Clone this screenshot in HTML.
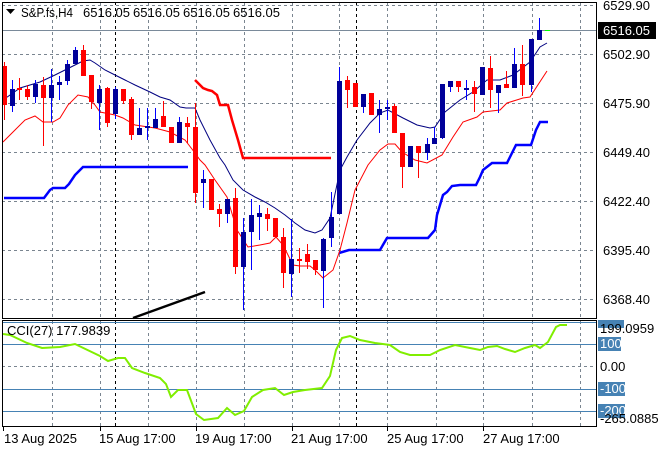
<!DOCTYPE html>
<html><head><meta charset="utf-8"><style>
html,body{margin:0;padding:0;background:#fff;width:660px;height:450px;overflow:hidden}
svg{display:block;font-family:"Liberation Sans",sans-serif;font-size:13px}
</style></head><body>
<svg width="660" height="450" xmlns="http://www.w3.org/2000/svg">
<rect width="660" height="450" fill="#fff"/>
<g stroke="#7a8590" stroke-dasharray="3,3" stroke-width="1">
<line x1="2" x2="596" y1="54.5" y2="54.5"/><line x1="2" x2="596" y1="103.5" y2="103.5"/>
<line x1="2" x2="596" y1="152.5" y2="152.5"/><line x1="2" x2="596" y1="201.5" y2="201.5"/>
<line x1="2" x2="596" y1="250.5" y2="250.5"/><line x1="2" x2="596" y1="299.5" y2="299.5"/>
<line x1="2" x2="596" y1="5.5" y2="5.5"/>
<line x1="2" x2="596" y1="366.5" y2="366.5"/>
</g>
<g stroke="#7a8590" stroke-dasharray="3,3">
<path d="M52.5 2V318M100.5 2V318M148.5 2V318M196.5 2V318M244.5 2V318M292.5 2V318M339.5 2V318M387.5 2V318M436.5 2V318M483.5 2V318M532.5 2V318M580.5 2V318"/>
<path d="M52.5 321V426M100.5 321V426M148.5 321V426M196.5 321V426M244.5 321V426M292.5 321V426M339.5 321V426M387.5 321V426M436.5 321V426M483.5 321V426M532.5 321V426M580.5 321V426"/>
</g>
<g stroke="#000" stroke-dasharray="3,3">
<path d="M115.5 2V318M356.5 2V318M115.5 321V426M356.5 321V426"/>
</g>
<line x1="2" x2="596" y1="30.5" y2="30.5" stroke="#7a8a9a"/>
<polyline fill="none" stroke="#0000ff" stroke-width="2.5" points="4,198 44,198 50,190 53,188 65,188 69,184 75,175 83,167 188,167"/>
<polyline fill="none" stroke="#0000ff" stroke-width="2.5" points="339,253 349,250 380,250 387,238 428,238 435,230 437,215 443,195 447,192 452,186 460,185 476,185 480,177 483,170 492,163 507,163 510,157 516,145 531,145 536,130 540,122 548,122"/>
<polyline fill="none" stroke="#ff0000" stroke-width="2.5" points="195,80 203,88 208,90 212,91 217,95 220,105 228,105 232,120 238,140 243,158 331,158"/>
<polyline fill="none" stroke="#ff0000" stroke-width="1" points="3,142 15,130 25,120 35,116 43,122 53,122 60,118 68,105 78,95 88,97 95,105 100,112 115,115 123,118 135,125 155,128 170,132 185,140 195,153 200,160 205,165 215,180 227,197 237,230 248,247 260,245 270,243 276,237 283,245 293,265 300,266 310,266 315,270 323,278 333,270 340,250 347,223 355,190 368,165 380,150 388,144 395,144 402,152 415,160 427,163 442,155 453,137 463,122 477,117 483,112 500,110 507,103 523,98 530,97 547,71"/>
<polyline fill="none" stroke="#000080" stroke-width="1" points="3,100 20,88 40,82 55,75 65,70 75,65 83,61 90,60 95,63 105,70 115,75 125,80 135,85 150,92 160,97 170,100 180,107 186,108 195,108 200,120 210,140 220,158 225,165 233,180 243,190 255,197 265,202 275,208 285,215 295,223 305,230 315,233 322,230 330,218 340,170 347,157 357,140 370,123 380,113 388,110 403,118 417,125 430,128 435,127 445,112 460,100 473,92 487,80 500,80 513,75 530,62 540,47 547,43"/>
<g>
<g stroke="#ff0000" fill="#ff0000">
<path d="M4.5 62V120M19.5 78V100M27.5 85V100M43.5 77V146M83.5 45V76M91.5 75V109M107.5 87V127M123.5 89V104M131.5 97V140M163.5 101V127M171.5 127V143M187.5 117V143M195.5 103V203M211.5 179V210M219.5 204V227M235.5 188V274M267.5 208V231M275.5 218V237M283.5 228V288M299.5 248V273M307.5 244V269M315.5 260V275M347.5 76V108M355.5 83V107M371.5 93V115M394.5 104V133M402.5 133V188M418.5 146V178M458.5 81V92M474.5 81V112M490.5 56V108M506.5 71V88M522.5 45V96"/>
</g>
<g fill="#ff0000">
<rect x="2" y="66" width="5" height="39"/><rect x="17" y="88" width="5" height="2"/><rect x="25" y="89" width="5" height="8"/>
<rect x="41" y="85" width="5" height="13"/><rect x="81" y="50" width="5" height="26"/><rect x="89" y="75" width="5" height="27"/>
<rect x="105" y="88" width="5" height="35"/><rect x="121" y="89" width="5" height="12"/><rect x="129" y="99" width="5" height="36"/>
<rect x="161" y="116" width="5" height="11"/><rect x="169" y="127" width="5" height="16"/><rect x="185" y="123" width="5" height="4"/>
<rect x="193" y="127" width="5" height="66"/><rect x="209" y="179" width="5" height="31"/><rect x="217" y="209" width="5" height="5"/>
<rect x="233" y="198" width="5" height="69"/><rect x="265" y="214" width="5" height="5"/><rect x="273" y="218" width="5" height="19"/>
<rect x="281" y="237" width="5" height="36"/><rect x="297" y="259" width="5" height="2"/><rect x="305" y="254" width="5" height="8"/>
<rect x="313" y="260" width="5" height="10"/><rect x="345" y="80" width="5" height="10"/><rect x="353" y="83" width="5" height="24"/>
<rect x="369" y="93" width="5" height="22"/><rect x="392" y="106" width="5" height="27"/><rect x="400" y="133" width="5" height="34"/>
<rect x="416" y="146" width="5" height="7"/><rect x="456" y="81" width="5" height="6"/><rect x="472" y="87" width="5" height="7"/>
<rect x="488" y="68" width="5" height="22"/><rect x="504" y="84" width="5" height="4"/><rect x="520" y="64" width="5" height="21"/>
</g>
<g stroke="#0000ff">
<path d="M12.5 80V112M35.5 80V103M51.5 69V122M59.5 76V100M67.5 60V85M75.5 47V64M99.5 85V130M115.5 87V119M139.5 108V135M147.5 108V140M155.5 108V128M179.5 117V143M203.5 170V208M227.5 199V223M243.5 218V310M251.5 199V270M259.5 205V240M291.5 219V297M323.5 238V308M331.5 192V247M339.5 67V214M363.5 94V113M379.5 100V133M387.5 100V120M410.5 146V167M427.5 138V160M434.5 127V144M442.5 84V139M450.5 81V92M466.5 80V100M482.5 67V95M498.5 85V113M514.5 48V88M531.5 39V92M539.5 18V40"/>
</g>
<g fill="#000099">
<rect x="10" y="89" width="5" height="17"/><rect x="33" y="84" width="5" height="13"/><rect x="49" y="85" width="5" height="13"/>
<rect x="57" y="82" width="5" height="3"/><rect x="65" y="64" width="5" height="17"/><rect x="73" y="50" width="5" height="14"/>
<rect x="97" y="89" width="5" height="14"/><rect x="113" y="89" width="5" height="25"/><rect x="137" y="128" width="5" height="7"/>
<rect x="145" y="126" width="5" height="2"/><rect x="153" y="119" width="5" height="9"/><rect x="177" y="122" width="5" height="21"/>
<rect x="201" y="179" width="5" height="4"/><rect x="225" y="199" width="5" height="15"/><rect x="241" y="232" width="5" height="35"/>
<rect x="249" y="215" width="5" height="17"/><rect x="257" y="213" width="5" height="4"/><rect x="289" y="259" width="5" height="15"/>
<rect x="321" y="239" width="5" height="32"/><rect x="329" y="217" width="5" height="21"/><rect x="337" y="81" width="5" height="133"/>
<rect x="361" y="94" width="5" height="13"/><rect x="377" y="109" width="5" height="6"/><rect x="385" y="107" width="5" height="2"/>
<rect x="408" y="146" width="5" height="21"/><rect x="425" y="144" width="5" height="9"/><rect x="432" y="138" width="5" height="6"/>
<rect x="440" y="84" width="5" height="54"/><rect x="448" y="81" width="5" height="6"/><rect x="464" y="88" width="5" height="2"/>
<rect x="480" y="67" width="5" height="28"/><rect x="496" y="85" width="5" height="8"/><rect x="512" y="64" width="5" height="24"/>
<rect x="529" y="39" width="5" height="46"/><rect x="537" y="30" width="5" height="10"/>
</g>
</g>
<line x1="545" x2="550" y1="30.5" y2="30.5" stroke="#00ff00"/>
<line x1="133" y1="318" x2="205" y2="292" stroke="#000" stroke-width="2.5"/>
<g stroke="#4682b4">
<line x1="2" x2="596" y1="322.5" y2="322.5"/>
<line x1="2" x2="596" y1="344.5" y2="344.5"/>
<line x1="2" x2="596" y1="389.5" y2="389.5"/>
<line x1="2" x2="596" y1="411.5" y2="411.5"/>
</g>
<polyline fill="none" stroke="#80ee00" stroke-width="2" points="3,334 10,335 27,343 42,348 60,347 75,344 100,356 108,361 118,358 125,358 132,368 145,373 160,378 166,384 171,397 178,390 187,390 196,414 204,420 218,418 227,408 235,415 244,411 252,397 263,390 275,388 284,395 293,392 305,390 322,388 330,376 336,350 342,338 350,336 360,340 375,343 390,345 400,352 410,355 425,355 430,355 440,350 455,345 470,348 480,350 488,347 497,346 505,349 515,352 525,348 535,345 540,348 548,342 556,327 560,325 567,325"/>
<rect x="2.5" y="2.5" width="594" height="316" fill="none" stroke="#000"/>
<rect x="2.5" y="320.5" width="594" height="106" fill="none" stroke="#000"/>
<path d="M6 9h9l-4.5 5z" fill="#000"/>
<g fill="#000">
<text x="21" y="17" textLength="52" lengthAdjust="spacingAndGlyphs">S&amp;P.fs,H4</text>
<text x="83" y="17">6516.05</text>
<text x="133" y="17">6516.05</text>
<text x="183" y="17">6516.05</text>
<text x="233" y="17">6516.05</text>
<text x="7" y="335">CCI(27) 177.9839</text>
</g>
<g fill="#000">
<text x="603" y="10">6529.90</text>
<text x="603" y="59">6502.90</text>
<text x="603" y="108">6475.90</text>
<text x="603" y="157">6449.40</text>
<text x="603" y="206">6422.40</text>
<text x="603" y="255">6395.40</text>
<text x="603" y="304">6368.40</text>
</g>
<rect x="598" y="22" width="58" height="17" fill="#000"/>
<text x="603" y="35" fill="#fff">6516.05</text>
<g fill="#4682b4">
<rect x="598" y="320" width="26" height="8"/>
<rect x="598" y="337" width="23" height="14"/>
<rect x="598" y="382" width="27" height="14"/>
<rect x="598" y="404" width="27" height="14"/>
</g>
<g fill="#fff"><text x="600" y="348">100</text><text x="600" y="393">-100</text><text x="600" y="415">-200</text></g>
<g fill="#000"><text x="600" y="333">199.0959</text><text x="600" y="371">0.00</text><text x="600" y="423">-265.0885</text></g>
<g stroke="#000"><path d="M3.5 427V431M100.5 427V431M196.5 427V431M292.5 427V431M387.5 427V431M483.5 427V431"/></g>
<g fill="#000">
<text x="4" y="443">13 Aug 2025</text>
<text x="99" y="443">15 Aug 17:00</text>
<text x="195" y="443">19 Aug 17:00</text>
<text x="291" y="443">21 Aug 17:00</text>
<text x="387" y="443">25 Aug 17:00</text>
<text x="483" y="443">27 Aug 17:00</text>
</g>
</svg>
</body></html>
